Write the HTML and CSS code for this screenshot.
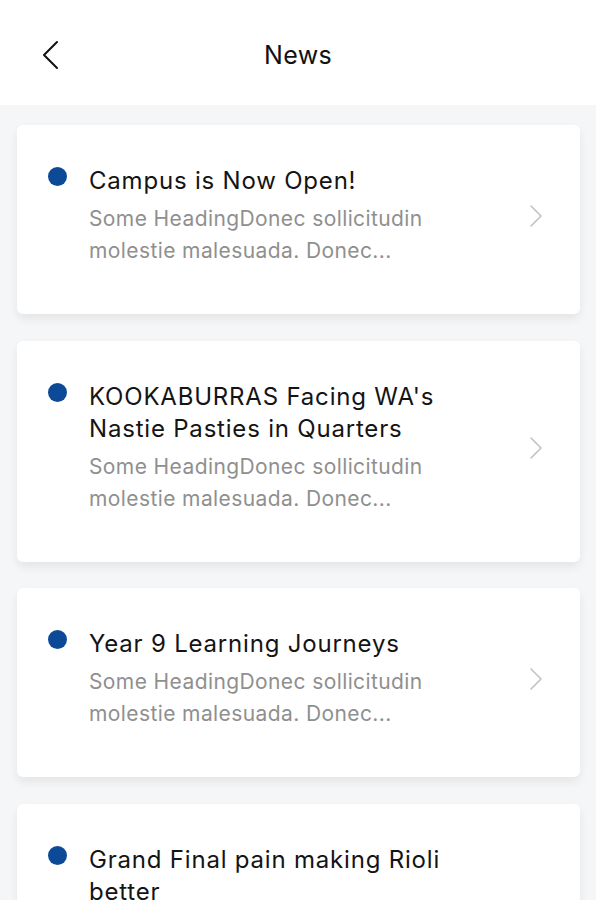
FILE: index.html
```html
<!DOCTYPE html>
<html>
<head>
<meta charset="utf-8">
<link rel="stylesheet" href="styles.css">
</head>
<body>
<header class="topbar">
  <button class="back" aria-label="Back">
    <svg width="18" height="30" viewBox="0 0 18 30"><path d="M16 2 L3 15 L16 28" fill="none" stroke="#111" stroke-width="2" stroke-linecap="round" stroke-linejoin="round"/></svg>
  </button>
  <h1 class="title">News</h1>
</header>
<main class="list">
  <article class="card">
    <span class="dot"></span>
    <div class="body">
      <h2 class="headline">Campus is Now Open!</h2>
      <p class="excerpt">Some HeadingDonec sollicitudin molestie malesuada. Donec...</p>
    </div>
    <svg class="chev" width="14" height="24" viewBox="0 0 14 24"><path d="M2 2 L12 12 L2 22" fill="none" stroke="#c2c2c2" stroke-width="1.6" stroke-linecap="round" stroke-linejoin="round"/></svg>
  </article>
  <article class="card">
    <span class="dot"></span>
    <div class="body">
      <h2 class="headline">KOOKABURRAS Facing WA's Nastie Pasties in Quarters</h2>
      <p class="excerpt">Some HeadingDonec sollicitudin molestie malesuada. Donec...</p>
    </div>
    <svg class="chev" width="14" height="24" viewBox="0 0 14 24"><path d="M2 2 L12 12 L2 22" fill="none" stroke="#c2c2c2" stroke-width="1.6" stroke-linecap="round" stroke-linejoin="round"/></svg>
  </article>
  <article class="card">
    <span class="dot"></span>
    <div class="body">
      <h2 class="headline">Year 9 Learning Journeys</h2>
      <p class="excerpt">Some HeadingDonec sollicitudin molestie malesuada. Donec...</p>
    </div>
    <svg class="chev" width="14" height="24" viewBox="0 0 14 24"><path d="M2 2 L12 12 L2 22" fill="none" stroke="#c2c2c2" stroke-width="1.6" stroke-linecap="round" stroke-linejoin="round"/></svg>
  </article>
  <article class="card">
    <span class="dot"></span>
    <div class="body">
      <h2 class="headline">Grand Final pain making Rioli better</h2>
      <p class="excerpt">Some HeadingDonec sollicitudin molestie malesuada. Donec...</p>
    </div>
    <svg class="chev" width="14" height="24" viewBox="0 0 14 24"><path d="M2 2 L12 12 L2 22" fill="none" stroke="#c2c2c2" stroke-width="1.6" stroke-linecap="round" stroke-linejoin="round"/></svg>
  </article>
</main>
</body>
</html>
```

FILE: styles.css
```css
* { box-sizing: border-box; }
html, body {
  margin: 0;
  padding: 0;
  background: #f5f6f7;
  font-family: Inter, "Noto Sans", sans-serif;
}
.topbar {
  height: 105px;
  background: #fff;
  display: flex;
  align-items: center;
  justify-content: center;
  position: relative;
}
.back {
  position: absolute;
  left: 41px;
  top: 40px;
  padding: 0;
  border: 0;
  background: none;
  display: flex;
}
.title {
  margin: 0;
  font-size: 25px;
  line-height: 32px;
  font-weight: 400;
  letter-spacing: 0.3px;
  color: #111;
  padding-top: 4px;
}
.list {
  padding: 20px 16px 20px 17px;
  display: flex;
  flex-direction: column;
  gap: 26.5px;
}
.card {
  background: #fff;
  border-radius: 6px;
  box-shadow: 0 5px 10px rgba(0,0,0,0.07);
  display: flex;
  align-items: flex-start;
  padding: 40px 37px 47px 31px;
}
.dot {
  flex: none;
  width: 19px;
  height: 19px;
  border-radius: 50%;
  background: #0c4a98;
  margin-top: 2px;
  margin-right: 22px;
}
.body {
  flex: 1;
  min-width: 0;
  padding-right: 75px;
}
.headline {
  margin: 0;
  font-size: 24px;
  line-height: 32px;
  font-weight: 400;
  letter-spacing: 0.8px;
  color: #141414;
}
.excerpt {
  margin: 6px 0 0;
  font-size: 21px;
  line-height: 32px;
  font-weight: 400;
  letter-spacing: 0.4px;
  color: #8f8f8f;
}
.chev {
  flex: none;
  align-self: center;
}
```
